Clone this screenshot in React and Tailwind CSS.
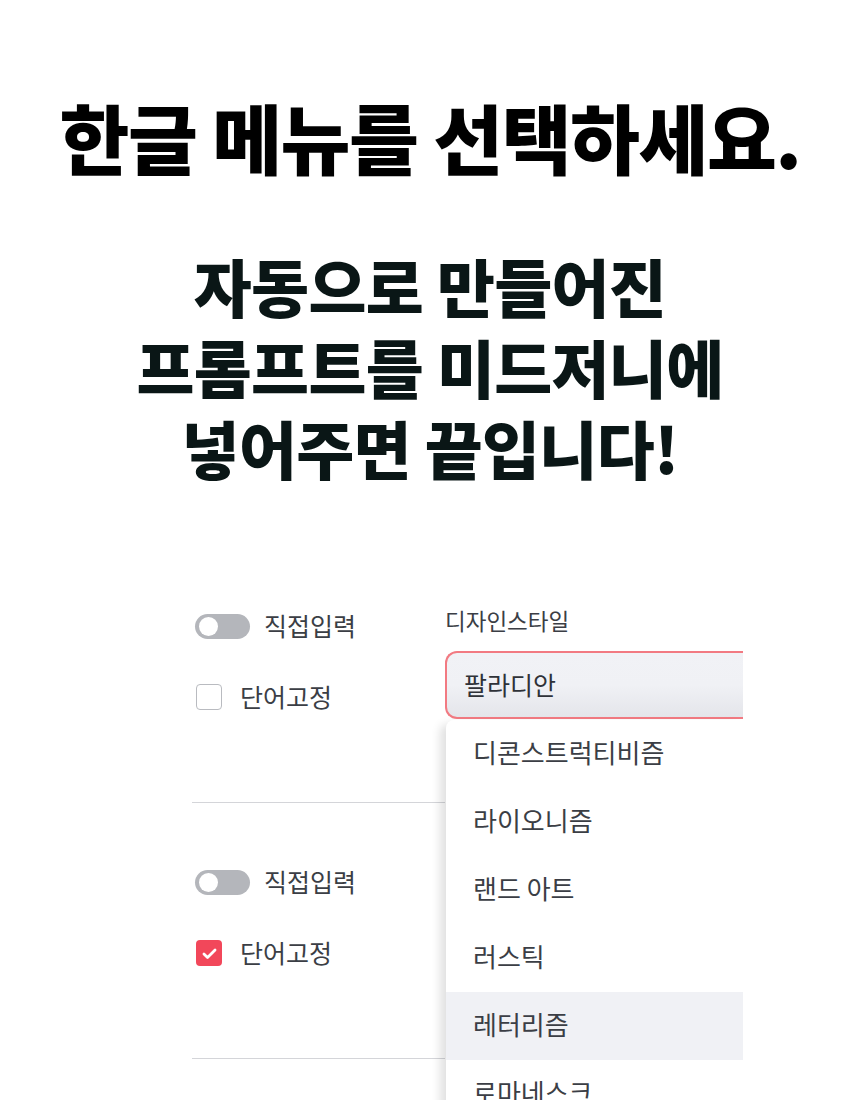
import React from 'react';

const FONT = { fontFamily: '"Noto Sans CJK KR", "Noto Sans", sans-serif' };

const Toggle = () => (
  <div className="relative h-[25px] w-[55px] rounded-full bg-[#b4b6bb]">
    <span className="absolute left-[4px] top-[3px] h-[19px] w-[19px] rounded-full bg-white" />
  </div>
);

const Checkbox = ({ checked }) =>
  checked ? (
    <div className="flex h-[26px] w-[26px] items-center justify-center rounded-[4px] bg-[#f2475a]">
      <svg width="19" height="19" viewBox="0 0 24 24" fill="none" stroke="white" strokeWidth="3.5" strokeLinecap="round" strokeLinejoin="round">
        <path d="M5 12.5l4.5 4.5L19 7.5" />
      </svg>
    </div>
  ) : (
    <div className="h-[26px] w-[26px] rounded-[4px] border-[1.5px] border-[#b9bbc0] bg-white" />
  );

const LeftSection = ({ checked, top }) => (
  <div className={`flex w-[253px] flex-col border-b border-[#d4d5d9] ${top}`}>
    <div className="flex h-[52px] items-center gap-[14px] pl-[3px]">
      <Toggle />
      <span className="text-[25px] text-[#3b3e45]">직접입력</span>
    </div>
    <div className="mt-[19px] flex h-[52px] items-center gap-[18px] pl-[4px]">
      <Checkbox checked={checked} />
      <span className="text-[25px] text-[#3b3e45]">단어고정</span>
    </div>
  </div>
);

const styles = ['디콘스트럭티비즘', '라이오니즘', '랜드 아트', '러스틱', '레터리즘', '로마네스크', '르네상스'];

export default function App() {
  return (
    <div className="h-[1100px] w-[860px] overflow-hidden bg-white" style={FONT}>
      <div className="flex flex-col items-center pt-[86px]">
        <h1 className="whitespace-nowrap text-[76px] font-black leading-[100px] tracking-[-0.02em] text-black">한글 메뉴를 선택하세요.</h1>
        <div className="mt-[58px] flex flex-col items-center text-[63px] font-black leading-[81px] tracking-[-0.01em] text-[#0a1616]">
          <p>자동으로 만들어진</p>
          <p>프롬프트를 미드저니에</p>
          <p>넣어주면 끝입니다!</p>
        </div>
      </div>

      <div className="relative mt-[113px] ml-[192px] h-[520px] w-[551px] overflow-hidden">
        <div className="flex">
          <div className="flex flex-col">
            <LeftSection checked={false} top="h-[203px]" />
            <LeftSection checked={true} top="h-[256px] pt-[53px]" />
          </div>
          <div className="flex w-[298px] flex-col">
            <div className="h-[44px] pt-[4px] text-[22.5px] text-[#3b3e45]">디자인스타일</div>
            <div className="mt-[7px] flex h-[68px] items-center rounded-l-[12px] border-y-2 border-l-2 border-[#f27a82] bg-gradient-to-b from-[#f1f2f6] via-[#f0f1f5] to-[#e4e5ea] pl-[17px] text-[25px] text-[#2f3238]">
              팔라디안
            </div>
          </div>
        </div>

        <div className="absolute left-[254px] top-[120px] w-[297px] rounded-tl-[8px] bg-white shadow-[-6px_4px_10px_rgba(0,0,0,0.12)]">
          {styles.map((s, i) => (
            <div
              key={s}
              className={`flex h-[68px] items-center pb-[6px] pl-[27px] text-[26px] text-[#3b3e45] ${i === 4 ? 'bg-[#f0f1f5]' : ''}`}
            >
              {s}
            </div>
          ))}
        </div>
      </div>
    </div>
  );
}
